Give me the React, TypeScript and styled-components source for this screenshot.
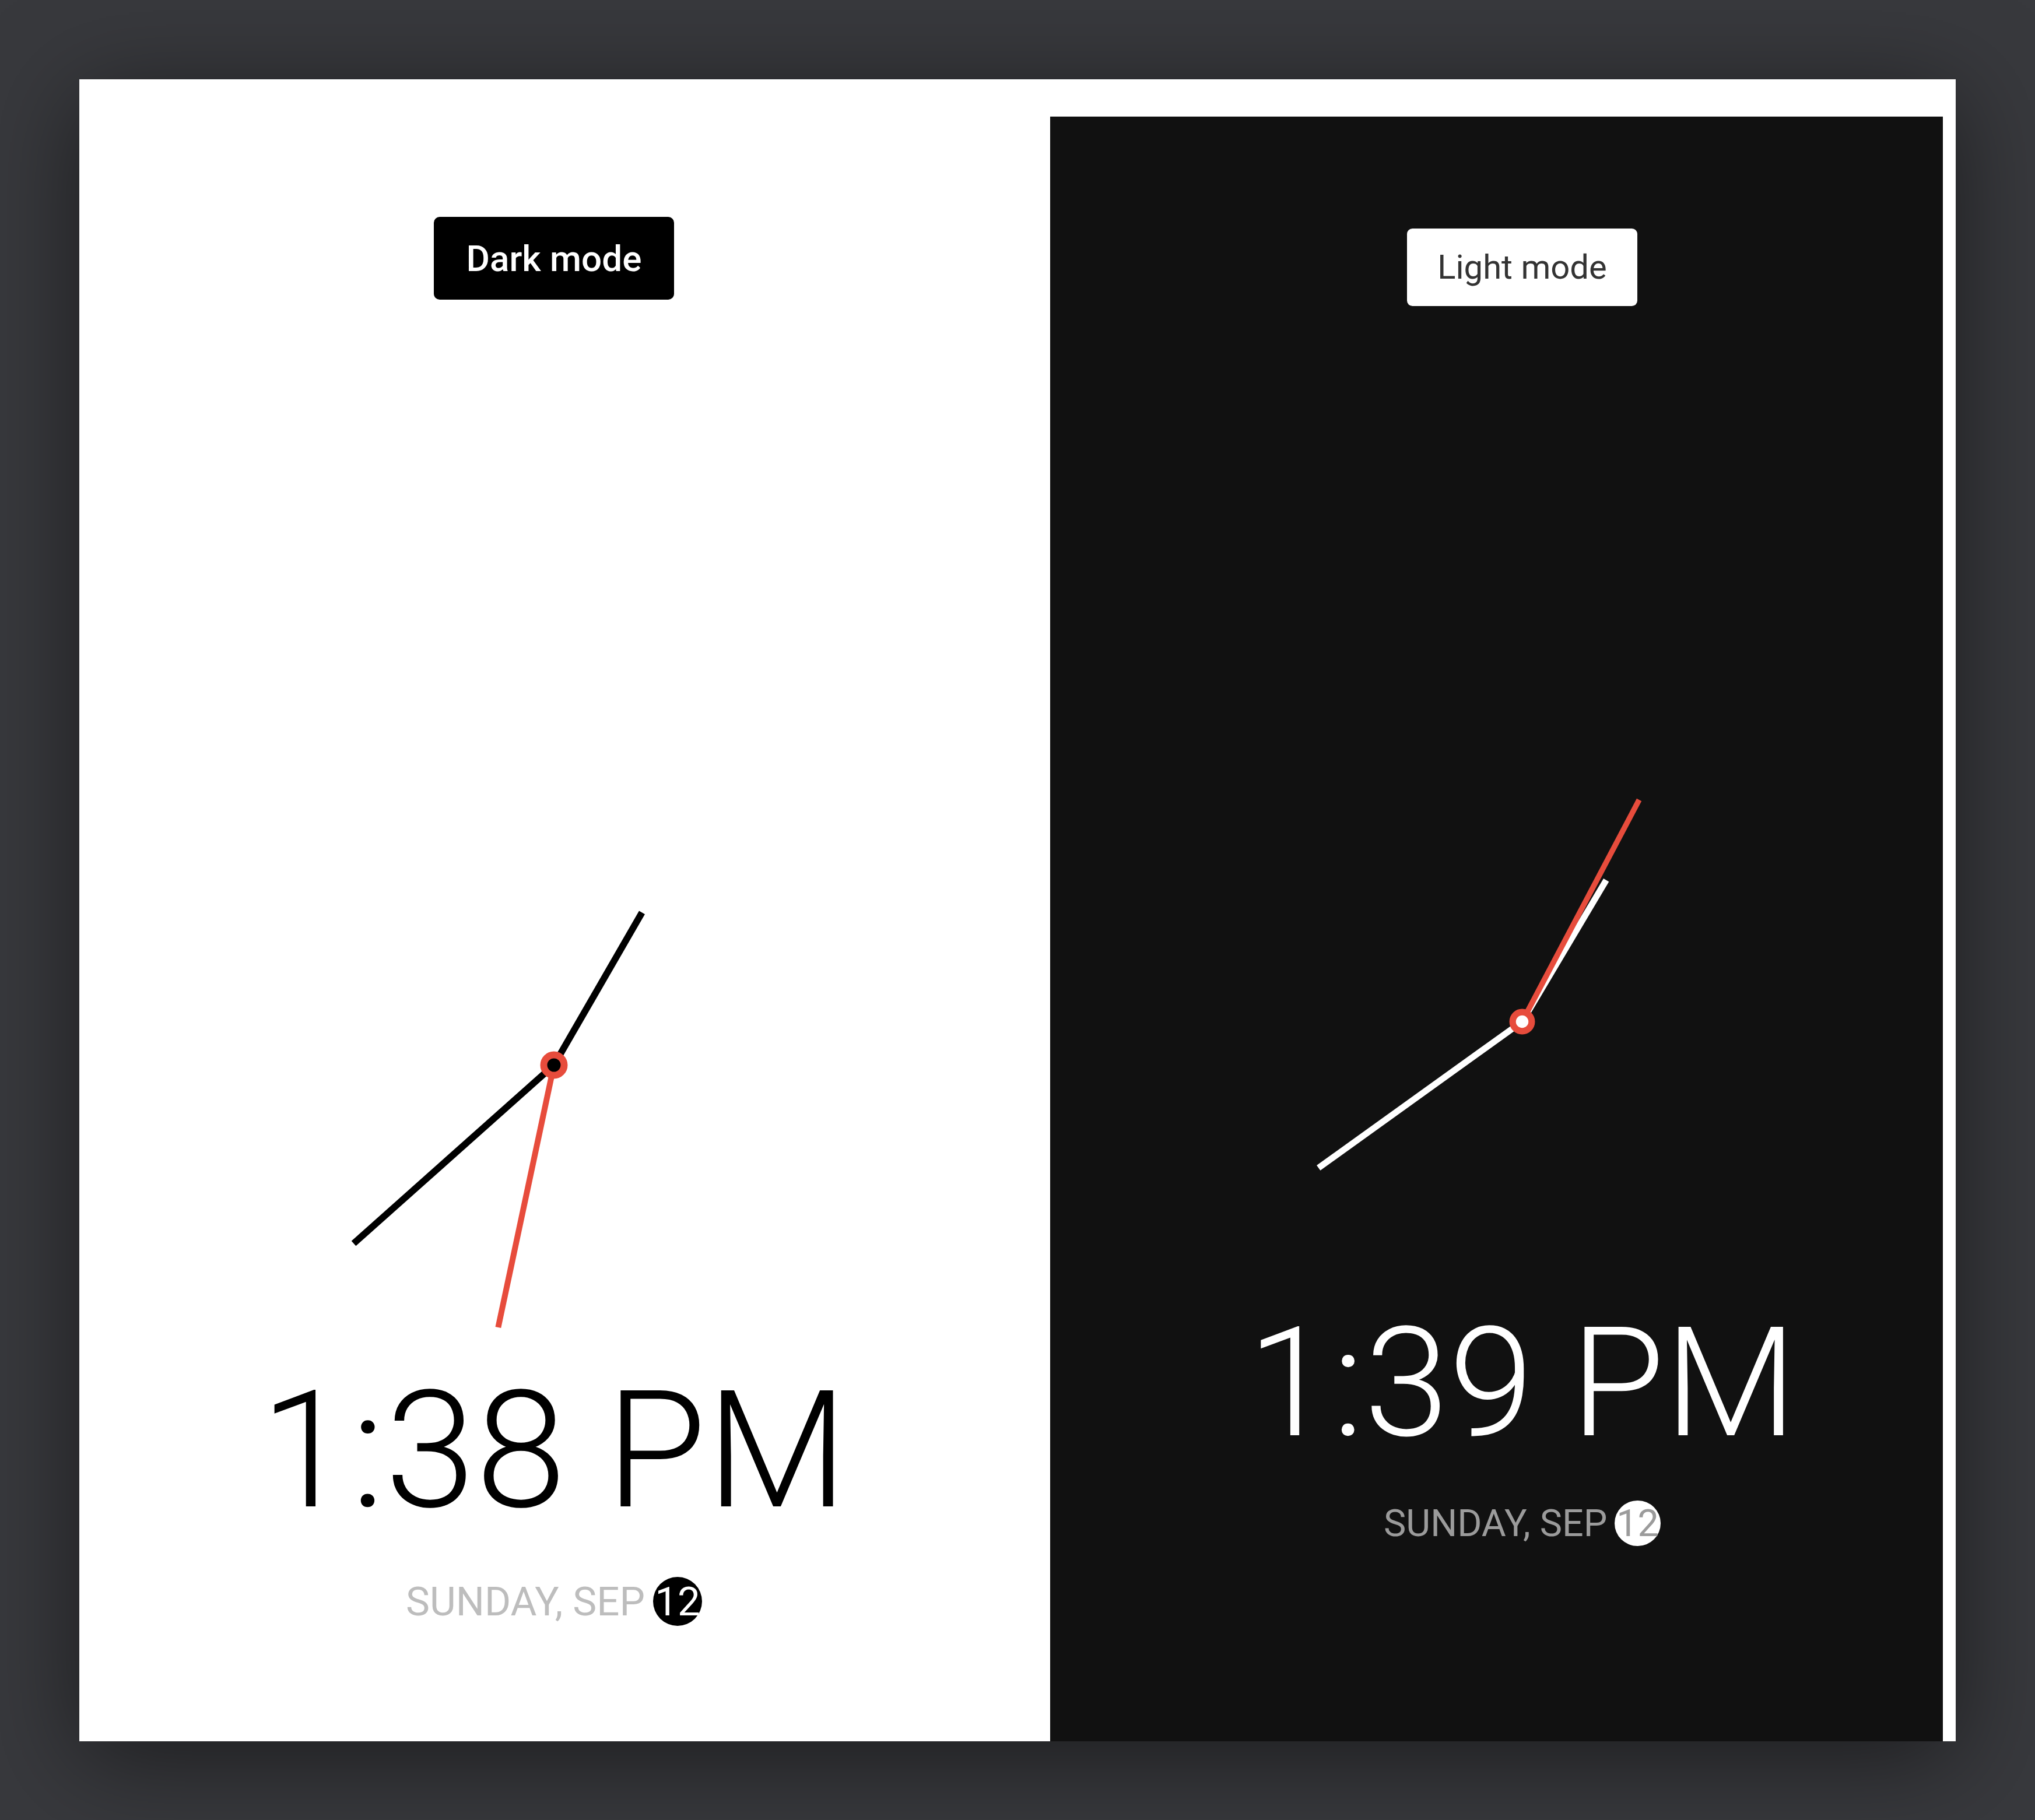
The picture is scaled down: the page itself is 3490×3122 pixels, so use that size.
import React from "react";
import styled, { createGlobalStyle } from "styled-components";

const GlobalStyle = createGlobalStyle`
  html,
  body {
    margin: 0;
    padding: 0;
  }

  body {
    background: #38393d;
    font-family: Roboto, "Liberation Sans", sans-serif;
  }
`;

type Mode = "light" | "dark";

type Metrics = {
  s: number;
  padTop: number;
  clockGap: number;
  timeGap: number;
  dateGap: number;
};

const palette = {
  light: {
    bg: "#fff",
    hand: "#000",
    hub: "#000",
    btnBg: "#000",
    btnFg: "#fff",
    btnWeight: 500,
    time: "#000",
    date: "#bdbdbd",
    dayBg: "#000",
    dayFg: "#fff",
  },
  dark: {
    bg: "#111",
    hand: "#fff",
    hub: "#fff",
    btnBg: "#fff",
    btnFg: "#333",
    btnWeight: 400,
    time: "#fff",
    date: "#9b9b9b",
    dayBg: "#fff",
    dayFg: "#9b9b9b",
  },
};

const RED = "#e74c3c";

const Page = styled.div`
  box-sizing: border-box;
  min-height: 100vh;
  padding: 136px 136px 135px;
`;

const Card = styled.div`
  height: 2851px;
  background: #fff;
  box-shadow: 0 30px 160px rgba(0, 0, 0, 0.5);
  display: grid;
  grid-template-columns: 1665px 1fr;
  overflow: hidden;
`;

const Panel = styled.section<{ $mode: Mode; $m: Metrics }>`
  display: flex;
  flex-direction: column;
  align-items: center;
  background: ${(p) => (p.$mode === "dark" ? palette.dark.bg : "transparent")};
  margin: ${(p) => (p.$mode === "dark" ? "64px 22px 0 0" : "0")};
  padding: ${(p) =>
    p.$mode === "dark" ? `${p.$m.padTop}px 0 0 88px` : `${p.$m.padTop}px 37px 0 0`};
`;

const ModeButton = styled.button<{ $mode: Mode; $s: number }>`
  height: ${(p) => 142 * p.$s}px;
  padding: 0 ${(p) => 56 * p.$s}px;
  border: none;
  border-radius: ${(p) => 10 * p.$s}px;
  background: ${(p) => palette[p.$mode].btnBg};
  color: ${(p) => palette[p.$mode].btnFg};
  font-family: Roboto, "Liberation Sans", sans-serif;
  font-size: ${(p) => 62 * p.$s}px;
  font-weight: ${(p) => palette[p.$mode].btnWeight};
  cursor: pointer;
`;

const Dial = styled.svg<{ $s: number; $gap: number }>`
  display: block;
  width: ${(p) => 1000 * p.$s}px;
  height: ${(p) => 1000 * p.$s}px;
  margin-top: ${(p) => p.$gap}px;
`;

const Time = styled.div<{ $mode: Mode; $s: number; $gap: number }>`
  margin-top: ${(p) => p.$gap}px;
  font-size: ${(p) => 280 * p.$s}px;
  line-height: 1;
  font-weight: 300;
  color: ${(p) => palette[p.$mode].time};
  white-space: nowrap;
`;

const DateLine = styled.div<{ $mode: Mode; $s: number; $gap: number }>`
  display: flex;
  align-items: center;
  margin-top: ${(p) => p.$gap}px;
  font-size: ${(p) => 69 * p.$s}px;
  font-weight: 400;
  color: ${(p) => palette[p.$mode].date};
  white-space: nowrap;
`;

const Day = styled.span<{ $mode: Mode }>`
  display: inline-flex;
  align-items: center;
  justify-content: center;
  width: 1.22em;
  height: 1.22em;
  margin-left: 0.2em;
  border-radius: 50%;
  background: ${(p) => palette[p.$mode].dayBg};
  color: ${(p) => palette[p.$mode].dayFg};
  font-weight: 400;
`;

type HandProps = { angle: number; length: number; color: string; width: number };

const Hand = ({ angle, length, color, width }: HandProps) => {
  const r = (angle * Math.PI) / 180;
  return (
    <line
      x1={0}
      y1={0}
      x2={Math.sin(r) * length}
      y2={-Math.cos(r) * length}
      stroke={color}
      strokeWidth={width}
    />
  );
};

type ClockProps = {
  mode: Mode;
  m: Metrics;
  hour: number;
  minute: number;
  second: number;
  time: string;
};

const Clock = ({ mode, m, hour, minute, second, time }: ClockProps) => {
  const c = palette[mode];
  return (
    <Panel $mode={mode} $m={m}>
      <ModeButton $mode={mode} $s={m.s}>
        {mode === "light" ? "Dark mode" : "Light mode"}
      </ModeButton>
      <Dial $s={m.s} $gap={m.clockGap} viewBox="-500 -500 1000 1000">
        <Hand angle={hour} length={302} color={c.hand} width={11.5} />
        <Hand angle={minute} length={460} color={c.hand} width={11.5} />
        <Hand angle={second} length={460} color={RED} width={10} />
        <circle cx={0} cy={0} r={17.5} fill={c.hub} stroke={RED} strokeWidth={12} />
      </Dial>
      <Time $mode={mode} $s={m.s} $gap={m.timeGap}>
        {time}
      </Time>
      <DateLine $mode={mode} $s={m.s} $gap={m.dateGap}>
        SUNDAY, SEP
        <Day $mode={mode}>12</Day>
      </DateLine>
    </Panel>
  );
};

const leftMetrics: Metrics = { s: 1, padTop: 236, clockGap: 813, timeGap: 21, dateGap: 77 };
const rightMetrics: Metrics = { s: 0.935, padTop: 192, clockGap: 760, timeGap: 22, dateGap: 70 };

const App = () => {
  return (
    <>
      <GlobalStyle />
      <Page>
        <Card>
          <Clock mode="light" m={leftMetrics} hour={30} minute={228.3} second={192} time="1:38 PM" />
          <Clock mode="dark" m={rightMetrics} hour={30.7} minute={234.3} second={27.8} time="1:39 PM" />
        </Card>
      </Page>
    </>
  );
};

export default App;
